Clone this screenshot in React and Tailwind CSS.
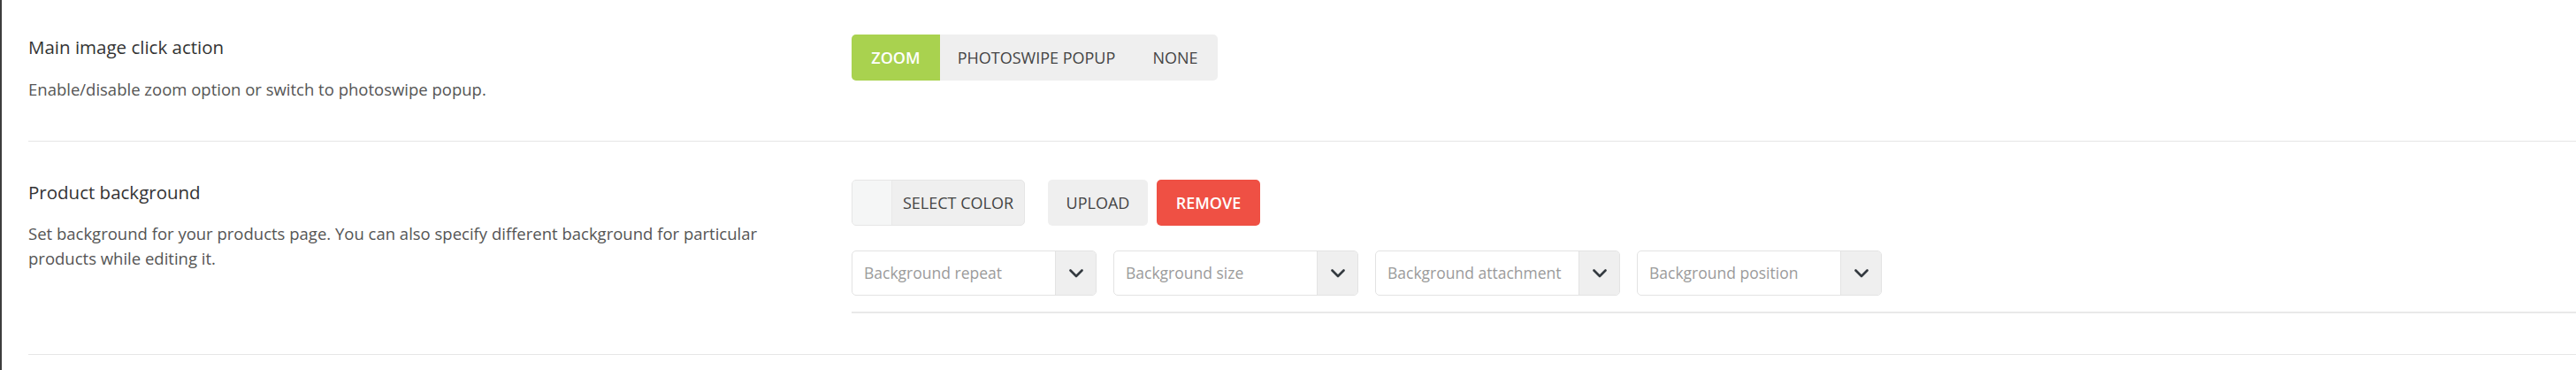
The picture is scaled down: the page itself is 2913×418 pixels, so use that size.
import React from "react";

const font = { fontFamily: '"Open Sans", "Noto Sans", sans-serif' };

function Chevron() {
  return (
    <svg width="16" height="10" viewBox="0 0 16 10" fill="none">
      <polyline points="1.5,1.5 8,8 14.5,1.5" stroke="#343a40" strokeWidth="2.6" strokeLinecap="round" strokeLinejoin="round" />
    </svg>
  );
}

function Select({ label }) {
  return (
    <div className="flex h-[51px] w-[277px] overflow-hidden rounded-[5px] border border-[#e3e3e3] bg-white">
      <div className="flex flex-1 items-center overflow-hidden whitespace-nowrap pl-[13px] text-[17.5px] text-[#9b9b9b]">{label}</div>
      <div className="flex w-[46px] items-center justify-center border-l border-[#e3e3e3] bg-[#efefef]">
        <Chevron />
      </div>
    </div>
  );
}

export default function App() {
  return (
    <div className="min-h-[418px] w-full border-l-2 border-[#3d3d3d] bg-white" style={font}>
      <div className="ml-[30px]">
        {/* Row 1 */}
        <div className="flex h-[160px] border-b border-[#e6e6e6] pt-[39px]">
          <div className="w-[931px] shrink-0 pr-[60px]">
            <div className="text-[20.5px] font-medium leading-[28px] text-[#333333]">Main image click action</div>
            <div className="mt-[20px] text-[18.5px] leading-[28.4px] text-[#555555]">Enable/disable zoom option or switch to photoswipe popup.</div>
          </div>
          <div>
            <div className="flex h-[52px] overflow-hidden rounded-[5px] bg-[#efefef] text-[18px] uppercase">
              <div className="flex w-[100px] items-center justify-center bg-[#a9d24f] font-semibold text-white">Zoom</div>
              <div className="flex w-[218px] items-center justify-center text-[#444444]">Photoswipe popup</div>
              <div className="flex w-[96px] items-center justify-center text-[#444444]">None</div>
            </div>
          </div>
        </div>
        {/* Row 2 */}
        <div className="flex h-[241px] border-b border-[#e6e6e6] pt-[43px]">
          <div className="w-[931px] shrink-0 pr-[60px]">
            <div className="text-[20.5px] font-medium leading-[28px] text-[#333333]">Product background</div>
            <div className="mt-[19px] text-[18.5px] leading-[28.4px] text-[#555555]">
              Set background for your products page. You can also specify different background for particular products while editing it.
            </div>
          </div>
          <div className="flex-1">
            <div className="flex items-center text-[18px] uppercase">
              <div className="flex h-[52px] w-[196px] overflow-hidden rounded-[5px] border border-[#e6e6e6] bg-[#efefef]">
                <div className="w-[45px] border-r border-[#e9e9e9] bg-[#f5f6f6]"></div>
                <div className="flex flex-1 items-center justify-center text-[#444444]">Select color</div>
              </div>
              <div className="ml-[26px] flex h-[52px] w-[113px] items-center justify-center rounded-[5px] bg-[#efefef] text-[#444444]">Upload</div>
              <div className="ml-[10px] flex h-[52px] w-[117px] items-center justify-center rounded-[5px] bg-[#ef5044] font-semibold text-white">Remove</div>
            </div>
            <div className="mt-[28px] flex gap-[19px]">
              <Select label="Background repeat" />
              <Select label="Background size" />
              <Select label="Background attachment" />
              <Select label="Background position" />
            </div>
            <div className="mt-[18px] h-[2px] bg-[#e9e9e9]"></div>
          </div>
        </div>
      </div>
    </div>
  );
}
